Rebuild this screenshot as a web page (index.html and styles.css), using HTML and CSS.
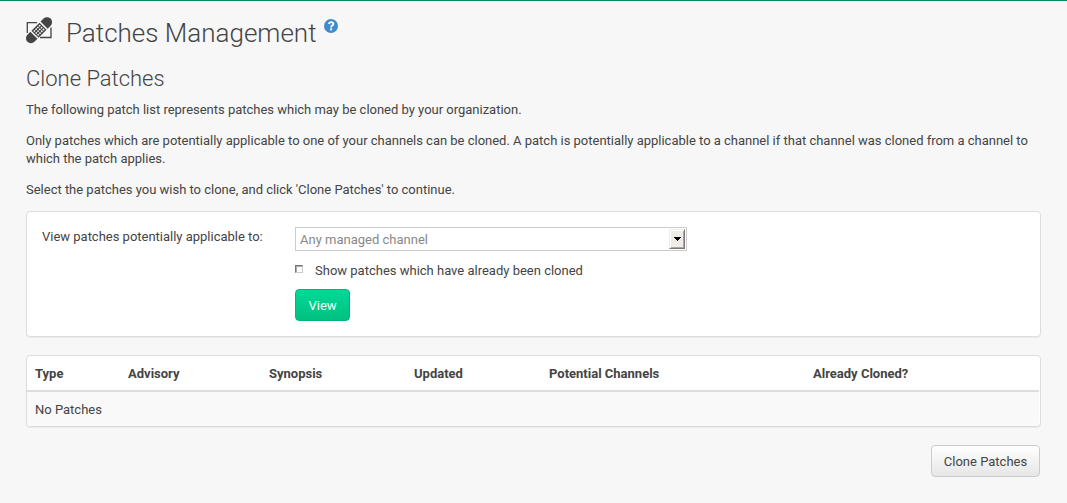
FILE: index.html
```html
<!DOCTYPE html>
<html lang="en">
<head>
<meta charset="utf-8">
<title>Patches Management</title>
<link rel="stylesheet" href="styles.css">
</head>
<body>
<main class="page">
  <h1 class="page-title">
    <svg class="patch-icon" viewBox="0 0 26 26" aria-hidden="true">
      <path d="M11 5.6H1.3V16M25 10.5V20.5H14" fill="none" stroke="#444" stroke-width="1.3"/>
      <g transform="rotate(-45 13 13.2)">
        <path d="M5.8 8.2H1.6A5 5 0 0 0 1.6 18.2H5.8ZM20.2 8.2H24.4A5 5 0 0 1 24.4 18.2H20.2ZM7.3 8.2H18.7V18.2H7.3Z" fill="#444"/>
        <g fill="#f7f7f7">
          <circle cx="9.2" cy="10.5" r=".9"/><circle cx="11.7" cy="10.5" r=".9"/><circle cx="14.2" cy="10.5" r=".9"/><circle cx="16.7" cy="10.5" r=".9"/>
          <circle cx="9.2" cy="13.2" r=".9"/><circle cx="11.7" cy="13.2" r=".9"/><circle cx="14.2" cy="13.2" r=".9"/><circle cx="16.7" cy="13.2" r=".9"/>
          <circle cx="9.2" cy="15.9" r=".9"/><circle cx="11.7" cy="15.9" r=".9"/><circle cx="14.2" cy="15.9" r=".9"/><circle cx="16.7" cy="15.9" r=".9"/>
        </g>
      </g>
    </svg>
    <span class="title-text">Patches Management</span>
    <svg class="help-icon" viewBox="0 0 14 14" aria-label="Help">
      <circle cx="7" cy="7" r="7" fill="#428bca"/>
      <path d="M4.7 5.1C5.1 3.7 6 3.1 7.1 3.1C8.4 3.1 9.3 3.9 9.3 5C9.3 6.6 7.1 6.5 7.1 8.4" fill="none" stroke="#fff" stroke-width="1.9"/>
      <path d="M6.1 9.4H8.1V11.3H6.1Z" fill="#fff"/>
    </svg>
  </h1>
  <h2 class="section-title">Clone Patches</h2>
  <p class="text">The following patch list represents patches which may be cloned by your organization.</p>
  <p class="text">Only patches which are potentially applicable to one of your channels can be cloned. A patch is potentially applicable to a channel if that channel was cloned from a channel to which the patch applies.</p>
  <p class="text">Select the patches you wish to clone, and click 'Clone Patches' to continue.</p>

  <form class="panel filter">
    <label class="filter-label">View patches potentially applicable to:</label>
    <div class="filter-fields">
      <div class="select">
        <span>Any managed channel</span>
        <span class="select-button"><svg viewBox="0 0 7 4" width="7" height="4" shape-rendering="crispEdges"><path d="M0 0H7V1H6V2H5V3H4V4H3V3H2V2H1V1H0Z"/></svg></span>
      </div>
      <label class="check"><span class="check-box"></span>Show patches which have already been cloned</label>
      <button type="button" class="button button-primary">View</button>
    </div>
  </form>

  <div class="panel list">
    <table class="table">
      <colgroup><col class="c-type"><col class="c-advisory"><col class="c-synopsis"><col class="c-updated"><col class="c-channels"><col></colgroup>
      <thead><tr><th>Type</th><th>Advisory</th><th>Synopsis</th><th>Updated</th><th>Potential Channels</th><th>Already Cloned?</th></tr></thead>
      <tbody><tr><td colspan="6">No Patches</td></tr></tbody>
    </table>
  </div>

  <div class="actions"><button type="button" class="button button-default">Clone Patches</button></div>
</main>
</body>
</html>
```
FILE: styles.css
```css
* { box-sizing: border-box; }
body {
  margin: 0;
  height: 503px;
  overflow: hidden;
  border-top: 1px solid #068a63;
  background: #f7f7f7;
  color: #444;
  font: 13px/18px Roboto, sans-serif;
}
.page { padding: 15px 26px 0; }
.page-title {
  display: flex;
  align-items: flex-start;
  margin: 0;
  height: 47px;
  font-size: 26px;
  font-weight: 300;
  line-height: 34px;
}
.patch-icon { width: 26px; height: 26px; margin: 1px 14px 0 0; overflow: visible; }
.help-icon { width: 14px; height: 14px; margin: 3px 0 0 7px; }
.section-title { margin: 0 0 6px; font-size: 22px; font-weight: 300; line-height: 32px; }
.text { margin: 0 0 13px; letter-spacing: -.01px; }
.panel {
  width: 1015px;
  border: 1px solid #ddd;
  border-radius: 4px;
  background: #fff;
  box-shadow: 0 1px 1px rgba(0, 0, 0, .05);
}
.filter { display: flex; height: 126px; margin-top: -1px; padding: 15px; }
.filter-label { width: 253px; padding-top: 1px; letter-spacing: -.01px; }
.filter-fields { display: flex; flex-direction: column; align-items: flex-start; }
.select {
  display: flex;
  justify-content: space-between;
  width: 392px;
  height: 24px;
  padding: 1px 1px 1px 4px;
  border: 1px solid #ccc;
  color: #888;
  line-height: 21px;
}
.select-button {
  display: flex;
  align-items: center;
  justify-content: center;
  width: 16px;
  height: 20px;
  border: 1px solid;
  border-color: #efebe7 #7b7977 #7b7977 #efebe7;
  background: #efebe7;
  box-shadow: inset 1px 1px #fff, inset -1px -1px #aaa6a2;
}
.select-button svg { fill: #000; }
.check { display: flex; margin-top: 11px; height: 18px; }
.check-box {
  width: 8px;
  height: 8px;
  margin: 3px 12px 0 0;
  border: 1px solid;
  border-color: #777 #ccc #ccc #777;
  box-shadow: inset 1px 1px #aaa;
}
.button {
  height: 32px;
  padding: 1px 11px 0;
  border-radius: 4px;
  font: 13px/18px Roboto, sans-serif;
  white-space: nowrap;
}
.button-primary {
  width: 55px;
  margin-top: 9px;
  border: 1px solid #00b67a;
  background: linear-gradient(#00d996, #00c081);
  color: #fff;
}
.button-default {
  width: 109px;
  border: 1px solid #ccc;
  background: linear-gradient(#fff, #e6e6e6);
  color: #444;
}
.list { height: 72px; margin-top: 18px; padding-right: 1px; }
.table { width: 100%; table-layout: fixed; border-collapse: separate; border-spacing: 0; }
.table th, .table td { padding: 2px 8px 0; text-align: left; }
.table th { height: 36px; border-bottom: 2px solid #ddd; font-weight: 700; }
.table td { height: 34px; background: #f9f9f9; border-radius: 0 0 3px 3px; }
.c-type { width: 93px; }
.c-advisory { width: 141px; }
.c-synopsis { width: 145px; }
.c-updated { width: 135px; }
.c-channels { width: 264px; }
.actions { display: flex; justify-content: flex-end; margin-top: 18px; padding-right: 1px; }
```
